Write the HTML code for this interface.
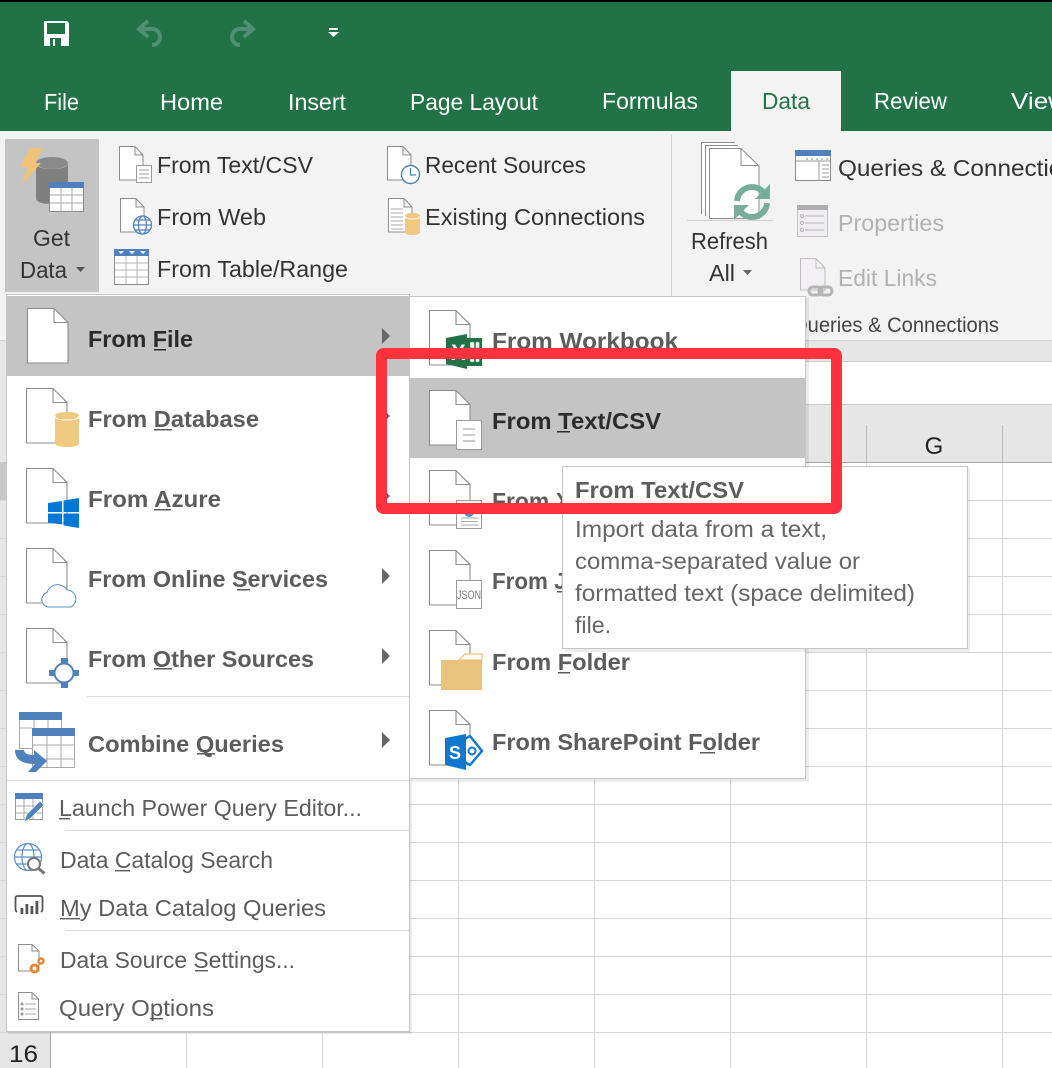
<!DOCTYPE html>
<html><head><meta charset="utf-8"><style>
html,body{margin:0;padding:0;background:#fff;width:1052px;height:1068px;overflow:hidden}
svg{display:block}
text{font-family:"Liberation Sans",sans-serif;font-size:23px}
.t{fill:#fff;font-size:23px}
.r{fill:#333}
.d{fill:#b1b1b1}
.b{font-weight:bold;fill:#5c5c5c}
.bk{font-weight:bold;fill:#2b2b2b}
.n{fill:#5c5c5c}
.p{fill:#666}
</style></head><body>
<svg width="1052" height="1068" viewBox="0 0 1052 1068" xmlns="http://www.w3.org/2000/svg">
<defs>
<symbol id="doc" overflow="visible"><path d="M.5.5H27L41 14.500V55H.5Z" fill="#fff" stroke="#8c8c8c" stroke-width="1.100"/><path d="M27 .5V14.500H41" fill="none" stroke="#8c8c8c" stroke-width="1.100"/></symbol>
<symbol id="sdoc" overflow="visible"><path d="M.5.5H16L24 9V34H.5ZM16 .5V9H24" fill="#fff" stroke="#8c8c8c" stroke-width="1"/></symbol>
<symbol id="lines" overflow="visible"><rect x=".5" y=".5" width="25" height="29" fill="#fff" stroke="#9a9a9a"/><path d="M7 9H19M7 15H19M7 21H19" stroke="#aaa" stroke-width="1.200"/></symbol>
</defs>

<!-- grid -->
<rect width="1052" height="1068" fill="#fff"/>
<rect y="340" width="1052" height="21" fill="#e6e6e6"/>
<rect y="404" width="1052" height="58" fill="#e6e6e6"/>
<rect y="361" width="1052" height="1" fill="#cfcfcf"/>
<rect y="404" width="1052" height="1" fill="#c8c8c8"/>
<rect y="462" width="1052" height="1" fill="#a8a8a8"/>
<rect x="0" y="462" width="50" height="606" fill="#e6e6e6"/>
<rect x="0" y="361" width="6" height="101" fill="#e6e6e6"/>
<rect x="0" y="462" width="6" height="38" fill="#c8c8c8"/>
<g stroke="#d6d6d6" stroke-width="1">
<path d="M0 500.500H1052M0 538.500H1052M0 576.500H1052M0 614.500H1052M0 652.500H1052M0 690.500H1052M0 728.500H1052M0 766.500H1052M0 804.500H1052M0 842.500H1052M0 880.500H1052M0 918.500H1052M0 956.500H1052M0 994.500H1052M0 1032.500H1052"/>
<path d="M50.500 463V1068M186.500 463V1068M322.500 463V1068M458.500 463V1068M594.500 463V1068M730.500 463V1068M866.500 463V1068M1002.500 463V1068"/>
</g>
<path d="M866.500 425V462M1002.500 425V462" stroke="#b9b9b9"/>
<rect x="50" y="1032" width="1" height="36" fill="#a8a8a8"/>
<text x="934" y="454" text-anchor="middle" fill="#222" style="font-size:24px">G</text>
<text x="9" y="1062" fill="#222" textLength="29" lengthAdjust="spacingAndGlyphs" style="font-size:24px">16</text>

<!-- title / tabs -->
<rect width="1052" height="131" fill="#217346"/>
<rect width="1052" height="2" fill="#000"/>
<path d="M44 21H67L69 23V46H44Z" fill="#fff"/>
<rect x="47" y="23" width="18" height="11" fill="#217346"/>
<rect x="50" y="38" width="11" height="8" fill="#217346"/>
<rect x="53" y="39" width="2" height="7" fill="#fff"/>
<g fill="none" stroke="#4f9072" stroke-width="4">
<path d="M139 29H152A8 8 0 0 1 152 45"/><path d="M148 21L139 29L148 37"/>
<path d="M253 29H240A8 8 0 0 0 240 45"/><path d="M244 21L253 29L244 37"/>
</g>
<rect x="329" y="28" width="9" height="2" fill="#fff"/><path d="M328 32H339L333.500 37Z" fill="#fff"/>

<rect x="731" y="71" width="110" height="60" fill="#f3f3f3"/>
<text class="t" x="44" y="110" textLength="35" lengthAdjust="spacingAndGlyphs">File</text>
<text class="t" x="160" y="110" textLength="63" lengthAdjust="spacingAndGlyphs">Home</text>
<text class="t" x="288" y="110" textLength="58" lengthAdjust="spacingAndGlyphs">Insert</text>
<text class="t" x="410" y="110" textLength="128" lengthAdjust="spacingAndGlyphs">Page Layout</text>
<text class="t" x="602" y="109" textLength="96" lengthAdjust="spacingAndGlyphs">Formulas</text>
<text x="762" y="109" fill="#217346" textLength="48" lengthAdjust="spacingAndGlyphs">Data</text>
<text class="t" x="874" y="109" textLength="73" lengthAdjust="spacingAndGlyphs">Review</text>
<text class="t" x="1011" y="109" textLength="56" lengthAdjust="spacingAndGlyphs">View</text>

<!-- ribbon -->
<rect y="131" width="1052" height="209" fill="#f3f3f3"/>
<rect y="340" width="1052" height="1" fill="#d2d2d2"/>
<rect x="671" y="135" width="1" height="205" fill="#d4d4d4"/>
<rect x="5" y="139" width="94" height="153" fill="#c4c4c4"/>
<ellipse cx="52" cy="163" rx="16" ry="6" fill="#8a8a8a"/>
<path d="M36 163V198Q36 204 52 204T68 198V163Q68 169 52 169T36 163Z" fill="#7f7f7f"/>
<path d="M30 148H43L35 163H41L21 186L28 167H20Z" fill="#efc27a"/>
<rect x="49.500" y="182.500" width="34" height="29" fill="#fff" stroke="#8a8a8a"/>
<rect x="49" y="182" width="35" height="6" fill="#4f81bd"/>
<path d="M50 195H83M50 203H83M61 188V211M72 188V211" stroke="#a8a8a8"/>
<text class="r" x="33" y="246" textLength="37" lengthAdjust="spacingAndGlyphs">Get</text>
<text class="r" x="20" y="278" textLength="47" lengthAdjust="spacingAndGlyphs">Data</text>
<path d="M76 267H85L80.500 272Z" fill="#555"/>

<use href="#sdoc" x="119" y="146"/>
<rect x="136.500" y="165.500" width="15" height="17" fill="#fff" stroke="#999"/><path d="M139 170H149M139 174H149M139 178H149" stroke="#999"/>
<text class="r" x="157" y="173" textLength="156" lengthAdjust="spacingAndGlyphs">From Text/CSV</text>
<use href="#sdoc" x="120" y="198"/>
<g fill="#fff" stroke="#4f81bd" stroke-width="1.300"><circle cx="142.500" cy="225" r="9"/><ellipse cx="142.500" cy="225" rx="4" ry="9"/><path d="M133.500 225H151.500M135 220H150M135 230H150" /></g>
<text class="r" x="157" y="225" textLength="109" lengthAdjust="spacingAndGlyphs">From Web</text>
<rect x="114.500" y="249.500" width="34" height="35" fill="#fff" stroke="#8a8a8a"/>
<rect x="114" y="249" width="35" height="7" fill="#4f81bd"/>
<path d="M118 251H124L121 254ZM129 251H135L132 254ZM140 251H146L143 254Z" fill="#fff"/>
<path d="M115 263H148M115 270H148M115 277H148M126 256V284M137 256V284" stroke="#b4b4b4"/>
<text class="r" x="157" y="277" textLength="191" lengthAdjust="spacingAndGlyphs">From Table/Range</text>

<use href="#sdoc" x="387" y="146"/>
<circle cx="410.500" cy="174.500" r="9" fill="#fff" stroke="#4f81bd" stroke-width="1.400"/><path d="M410.500 168V175H416" fill="none" stroke="#4f81bd" stroke-width="1.200"/>
<text class="r" x="425" y="173" textLength="161" lengthAdjust="spacingAndGlyphs">Recent Sources</text>
<use href="#sdoc" x="388" y="198"/>
<path d="M391 209H403M391 213H403M391 217H403M391 221H403M391 225H403M391 229H403" stroke="#aaa"/>
<path d="M405 216V232Q405 235 412.500 235T420 232V216Q420 213 412.500 213T405 216Z" fill="#efc97f"/><path d="M405 216Q405 219 412.500 219T420 216" fill="none" stroke="#fff"/>
<text class="r" x="425" y="225" textLength="220" lengthAdjust="spacingAndGlyphs">Existing Connections</text>

<g fill="#fff" stroke="#8c8c8c" stroke-width="1"><path d="M701.500 214V142.500H735"/><path d="M705.500 216V145.500H738"/><path d="M709.500 218.500V148.500H741L759 166V218.500Z"/><path d="M741 148.500V165.500H759" fill="none"/></g>
<rect x="687" y="220" width="86" height="1" fill="#d0d0d0"/>
<g fill="none" stroke="#79ad9b" stroke-width="6"><path d="M737 201A15 15 0 0 1 764 193"/><path d="M767 203A15 15 0 0 1 740 211"/></g>
<path d="M770 184V199H755ZM734 220V205H749Z" fill="#79ad9b"/>
<text class="r" x="691" y="249" textLength="77" lengthAdjust="spacingAndGlyphs">Refresh</text>
<text class="r" x="709" y="281" textLength="26" lengthAdjust="spacingAndGlyphs">All</text>
<path d="M743 270H752L747.500 275Z" fill="#666"/>

<rect x="795.500" y="150.500" width="35" height="30" fill="#fff" stroke="#8a8a8a"/>
<rect x="795" y="150" width="36" height="6" fill="#4f81bd"/>
<path d="M796 161H830M819 161V180M822 165H829M822 169H829M822 173H829M822 177H829" stroke="#999"/>
<path d="M806 159H828" stroke="#888" stroke-dasharray="2 3"/>
<text class="r" x="838" y="176" textLength="250" lengthAdjust="spacingAndGlyphs">Queries &amp; Connections</text>
<rect x="797.500" y="205.500" width="30" height="31" fill="#f0eef2" stroke="#c2c2c2"/>
<rect x="797" y="205" width="31" height="5" fill="#aeaeae"/>
<path d="M805 216H824M805 223H824M805 230H824" stroke="#b5b5b5"/>
<g fill="none" stroke="#b5b5b5"><circle cx="802" cy="216" r="1.500"/><circle cx="802" cy="223" r="1.500"/><circle cx="802" cy="230" r="1.500"/></g>
<text class="d" x="838" y="231" textLength="106" lengthAdjust="spacingAndGlyphs">Properties</text>
<path d="M800.500 258.500H816L825 268V290H800.500ZM816 258.500V268H825" fill="#f2f0f4" stroke="#bdbdbd"/>
<g fill="none" stroke="#b5b5b5" stroke-width="3"><rect x="809" y="287" width="13" height="8" rx="4"/><rect x="819" y="287" width="13" height="8" rx="4"/></g>
<text class="d" x="838" y="286" textLength="99" lengthAdjust="spacingAndGlyphs">Edit Links</text>
<text x="792" y="332" fill="#444" textLength="207" lengthAdjust="spacingAndGlyphs" style="font-size:21px">Queries &amp; Connections</text>

<!-- main dropdown -->
<rect x="8" y="296" width="404" height="738" fill="#000" opacity=".08"/>
<rect x="6.500" y="294.500" width="403" height="737" fill="#fff" stroke="#c6c6c6"/>
<rect x="7" y="296" width="402" height="80" fill="#c4c4c4"/>

<use href="#doc" x="27" y="308"/>
<text class="bk" x="88" y="347" textLength="105" lengthAdjust="spacingAndGlyphs">From File</text>
<rect x="154" y="349" width="12" height="1.500" fill="#2b2b2b"/>

<use href="#doc" x="26" y="388"/>
<path d="M55 416V443Q55 447 67 447T79 443V416Q79 412 67 412T55 416Z" fill="#efc97f"/><path d="M55 416Q55 420 67 420T79 416" fill="none" stroke="#fff"/>
<text class="b" x="88" y="427" textLength="171" lengthAdjust="spacingAndGlyphs">From Database</text>
<rect x="154" y="429" width="18" height="1.500" fill="#5c5c5c"/>

<use href="#doc" x="26" y="468"/>
<path d="M48 503L62 501V512H48ZM63.500 500.500L79 498V512H63.500ZM48 513.500H62V524.500L48 522.500ZM63.500 513.500H79V528L63.500 525.500Z" fill="#0078d7"/>
<text class="b" x="88" y="507" textLength="133" lengthAdjust="spacingAndGlyphs">From Azure</text>
<rect x="154" y="509" width="17" height="1.500" fill="#5c5c5c"/>

<use href="#doc" x="26" y="548"/>
<path d="M48 607A7.500 7.500 0 0 1 47 592.500A11 11 0 0 1 67 590A9 9 0 0 1 71 607Z" fill="#fff" stroke="#5a8fc7" stroke-width="1"/>
<text class="b" x="88" y="587" textLength="240" lengthAdjust="spacingAndGlyphs">From Online Services</text>
<rect x="237" y="589" width="13" height="1.500" fill="#5c5c5c"/>

<use href="#doc" x="26" y="628"/>
<path d="M61 658H68V664H61ZM61 682H68V688H61ZM49 670H55V676H49ZM73 670H79V676H73Z" fill="#4f81bd"/>
<circle cx="64" cy="673" r="9.500" fill="#fff" stroke="#4f81bd" stroke-width="2"/>
<text class="b" x="88" y="667" textLength="226" lengthAdjust="spacingAndGlyphs">From Other Sources</text>
<rect x="154" y="668" width="18" height="1.500" fill="#5c5c5c"/>

<rect x="87" y="696" width="322" height="1" fill="#dcdcdc"/>

<rect x="19.500" y="712.500" width="42" height="36" fill="#fff" stroke="#a8a8a8"/>
<rect x="19" y="712" width="43" height="8" fill="#4f81bd"/>
<path d="M20 728H32M34 720V728M48 720V728" stroke="#a8a8a8"/>
<rect x="32.500" y="728.500" width="42" height="39" fill="#fff" stroke="#a8a8a8"/>
<rect x="32" y="728" width="43" height="8" fill="#4f81bd"/>
<path d="M33 745H74M33 759H74M47 736V767M61 736V767" stroke="#a8a8a8"/>
<path d="M15 750H24Q24 755 34 755V750L47 761L36 772H28L35 764Q15 764 15 750Z" fill="#4f81bd"/>
<text class="b" x="88" y="752" textLength="196" lengthAdjust="spacingAndGlyphs">Combine Queries</text>
<rect x="197" y="753" width="18" height="1.500" fill="#5c5c5c"/>

<rect x="7" y="780" width="402" height="1" fill="#dcdcdc"/>

<rect x="15.500" y="793.500" width="27" height="26" fill="#fff" stroke="#999"/>
<rect x="15" y="793" width="28" height="6" fill="#4f81bd"/>
<path d="M16 806H42M16 813H42M24 799V819M33 799V819" stroke="#aaa"/>
<path d="M24 822L27 814L40 801L44 805L31 818Z" fill="#4f81bd" stroke="#fff" stroke-width=".6"/>
<text class="n" x="59" y="816" textLength="303" lengthAdjust="spacingAndGlyphs">Launch Power Query Editor...</text>
<rect x="59" y="818" width="11" height="1.400" fill="#5c5c5c"/>
<rect x="65" y="830" width="344" height="1" fill="#dcdcdc"/>

<g fill="none" stroke="#5a8fc7" stroke-width="1.200"><circle cx="28" cy="857" r="13.500"/><ellipse cx="28" cy="857" rx="6" ry="13.500"/><path d="M14.500 857H41.500M17 850H39M17 864H39"/></g>
<circle cx="34" cy="864" r="6" fill="#fff" stroke="#777" stroke-width="2"/><path d="M38.500 868.500L44.500 873.500" stroke="#777" stroke-width="3"/>
<text class="n" x="60" y="868" textLength="213" lengthAdjust="spacingAndGlyphs">Data Catalog Search</text>
<rect x="115" y="870" width="15" height="1.400" fill="#5c5c5c"/>

<path d="M17 912Q15.500 911 15.500 909V898Q15.500 896 18 896H40Q42.500 896 42.500 898V909Q42.500 911 41 912" fill="none" stroke="#555" stroke-width="1.800"/>
<path d="M20.500 908h2.800v6h-2.800ZM25.500 904h2.800v10h-2.800ZM30.500 906h2.800v8h-2.800ZM35.500 901h2.800v13h-2.800Z" fill="#555"/>
<text class="n" x="60" y="916" textLength="266" lengthAdjust="spacingAndGlyphs">My Data Catalog Queries</text>
<rect x="60" y="918" width="20" height="1.400" fill="#5c5c5c"/>
<rect x="65" y="930" width="344" height="1" fill="#dcdcdc"/>

<path d="M18.500 944.500H32L39 951V971H18.500ZM32 944.500V951H39" fill="#fff" stroke="#8c8c8c"/>
<g fill="none" stroke="#e8842c"><circle cx="34.500" cy="968.500" r="3.500" stroke-width="3"/><circle cx="41" cy="961" r="2.500" stroke-width="2.400"/></g>
<text class="n" x="60" y="968" textLength="235" lengthAdjust="spacingAndGlyphs">Data Source Settings...</text>
<rect x="195" y="970" width="13" height="1.400" fill="#5c5c5c"/>

<path d="M18.500 992.500H32L38.500 999V1019.500H18.500ZM32 992.500V999H38.500" fill="#fff" stroke="#8c8c8c"/>
<path d="M25 1004H36M25 1009H36M25 1014H36" stroke="#aaa"/>
<g fill="none" stroke="#888"><circle cx="22" cy="1004" r="1"/><circle cx="22" cy="1009" r="1"/><circle cx="22" cy="1014" r="1"/></g>
<text class="n" x="59" y="1016" textLength="155" lengthAdjust="spacingAndGlyphs">Query Options</text>
<rect x="150" y="1018" width="13" height="1.400" fill="#5c5c5c"/>

<g fill="#666"><path d="M382 328L390 336L382 344Z"/><path d="M382 408L390 416L382 424Z"/><path d="M382 488L390 496L382 504Z"/><path d="M382 568L390 576L382 584Z"/><path d="M382 648L390 656L382 664Z"/><path d="M382 732L390 740L382 748Z"/></g>

<!-- submenu -->
<rect x="411" y="298" width="398" height="484" fill="#000" opacity=".07"/>
<rect x="409.500" y="296.500" width="396" height="482" fill="#fff" stroke="#c6c6c6"/>
<rect x="410" y="378" width="395" height="80" fill="#c4c4c4"/>

<use href="#doc" x="429" y="310"/>
<rect x="466" y="338" width="16" height="28" fill="#217346"/>
<path d="M469.500 341.500H480V362.500H469.500ZM469.500 348.500H480M469.500 355.500H480M475 341.500V362.500" fill="#fff" stroke="#217346" stroke-width="1.500"/>
<path d="M446 338L467 334V369L446 364Z" fill="#217346"/>
<text x="451" y="360" fill="#fff" style="font-size:22px;font-weight:bold">X</text>
<text class="b" x="492" y="349" textLength="186" lengthAdjust="spacingAndGlyphs">From Workbook</text>

<use href="#doc" x="429" y="390"/>
<g transform="translate(456 420)"><use href="#lines"/></g>
<text class="bk" x="492" y="429" textLength="169" lengthAdjust="spacingAndGlyphs">From Text/CSV</text>
<rect x="557" y="431" width="13" height="1.500" fill="#2b2b2b"/>

<use href="#doc" x="429" y="470"/>
<rect x="456.500" y="500.500" width="25" height="28" fill="#fff" stroke="#9a9a9a"/>
<circle cx="469" cy="512" r="5" fill="#5a8fc7"/>
<path d="M461 518H478M461 521.500H478M461 525H478" stroke="#aaa"/>
<text class="b" x="492" y="509" textLength="112" lengthAdjust="spacingAndGlyphs">From XML</text>

<use href="#doc" x="429" y="550"/>
<rect x="456.500" y="580.500" width="25" height="28" fill="#fff" stroke="#9a9a9a"/>
<text x="457" y="599" fill="#777" textLength="24" lengthAdjust="spacingAndGlyphs" style="font-size:12px">JSON</text>
<text class="b" x="492" y="589" textLength="123" lengthAdjust="spacingAndGlyphs">From JSON</text>
<rect x="557" y="591" width="13" height="1.500" fill="#5c5c5c"/>

<use href="#doc" x="429" y="630"/>
<path d="M459 660L465 654H482V660Z" fill="#fff" stroke="#e9c27e" stroke-width="1.200"/>
<rect x="441" y="660" width="41" height="30" fill="#e9c27e"/>
<text class="b" x="492" y="670" textLength="138" lengthAdjust="spacingAndGlyphs">From Folder</text>
<rect x="558" y="672" width="12" height="1.500" fill="#5c5c5c"/>

<use href="#doc" x="429" y="710"/>
<path d="M465 739L470 736L482 751L470 765L465 762" fill="#fff" stroke="#0f78cd" stroke-width="2.400"/>
<circle cx="472" cy="751" r="3.500" fill="#fff" stroke="#0f78cd" stroke-width="2"/>
<path d="M445 738L466 734V770L445 765Z" fill="#0f78cd"/>
<text x="449" y="759" fill="#fff" style="font-size:18px;font-weight:bold">S</text>
<text class="b" x="492" y="750" textLength="268" lengthAdjust="spacingAndGlyphs">From SharePoint Folder</text>
<rect x="700" y="752" width="15" height="1.500" fill="#5c5c5c"/>

<!-- tooltip -->
<rect x="565" y="468" width="405" height="184" fill="#000" opacity=".07"/>
<rect x="562.500" y="466.500" width="405" height="182" fill="#fff" stroke="#c6c6c6"/>
<text class="b" x="575" y="498" textLength="169" lengthAdjust="spacingAndGlyphs">From Text/CSV</text>
<text class="p" x="575" y="537" textLength="252" lengthAdjust="spacingAndGlyphs">Import data from a text,</text>
<text class="p" x="575" y="569" textLength="285" lengthAdjust="spacingAndGlyphs">comma-separated value or</text>
<text class="p" x="575" y="601" textLength="340" lengthAdjust="spacingAndGlyphs">formatted text (space delimited)</text>
<text class="p" x="575" y="633" textLength="36" lengthAdjust="spacingAndGlyphs">file.</text>

<!-- red annotation -->
<rect x="381.500" y="353.500" width="455" height="155" rx="2" fill="none" stroke="#fe323f" stroke-width="11"/>
</svg>
</body></html>
